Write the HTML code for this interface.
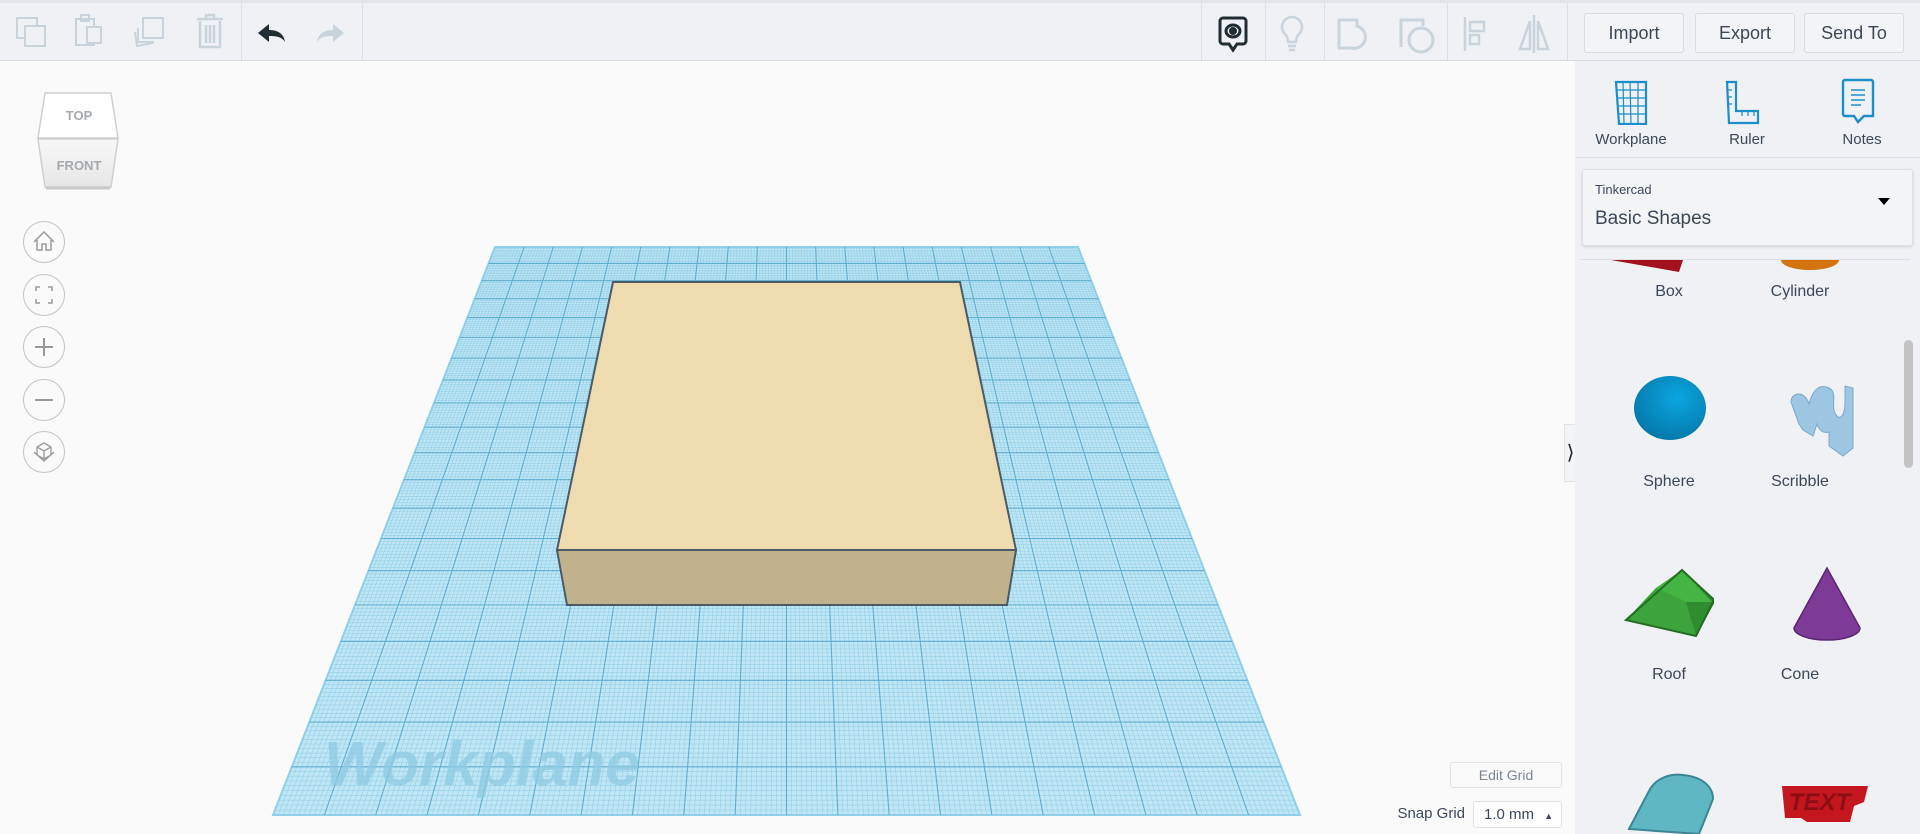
<!DOCTYPE html>
<html><head><meta charset="utf-8"><style>
*{margin:0;padding:0;box-sizing:border-box}
body{width:1920px;height:834px;overflow:hidden;background:#fafafa;font-family:"Liberation Sans",sans-serif;position:relative;color:#3c4858}
.tb{position:absolute;left:0;top:0;width:1920px;height:61px;background:#f0f1f4;border-top:3px solid #e2e4ea;border-bottom:1px solid #d8dbe1}
.sep{position:absolute;top:0;width:1px;height:57px;background:#dcdfe5}
.ic{position:absolute}
.btn{position:absolute;top:10px;height:40px;border:1px solid #d8dbe1;border-radius:3px;background:#f3f4f6;font-size:18px;color:#3c4858;text-align:center;line-height:38px}
.panel{position:absolute;left:1575px;top:61px;width:345px;height:773px;background:#f0f1f4}
.lbl{position:absolute;font-size:15px;color:#3c4858;text-align:center;width:120px}
.circ{position:absolute;left:23px;width:42px;height:42px;border:1px solid #c4c4c4;border-radius:50%;background:#fafafa}
</style></head><body>
<div class="tb">
 <svg class="ic" style="left:16px;top:12px" width="32" height="34" viewBox="0 0 32 34" fill="none" stroke="#c9d3dc" stroke-width="2"><rect x="1" y="3" width="20" height="20"/><rect x="9" y="11" width="20" height="20" fill="#f0f1f4"/></svg>
 <svg class="ic" style="left:74px;top:10px" width="30" height="36" viewBox="0 0 30 36" fill="none" stroke="#c9d3dc" stroke-width="2"><rect x="2" y="6" width="18" height="26"/><rect x="7" y="2" width="8" height="6"/><rect x="13" y="14" width="14" height="16" fill="#f0f1f4"/></svg>
 <svg class="ic" style="left:132px;top:11px" width="36" height="36" viewBox="0 0 36 36" fill="none" stroke="#c9d3dc" stroke-width="2"><path d="M3 18l2 14 16-3"/><path d="M6 14v14h16"/><rect x="11" y="4" width="20" height="20"/></svg>
 <svg class="ic" style="left:196px;top:10px" width="28" height="38" viewBox="0 0 28 38" fill="none" stroke="#c9d3dc" stroke-width="2.5"><path d="M1 6h26M10 6V2h8v4"/><path d="M4 8v26h20V8M10 12v18M14 12v18M18 12v18"/></svg>
 <svg class="ic" style="left:256px;top:18px" width="32" height="24" viewBox="0 0 32 24"><path d="M2 12L13 3v6c9 0 15 4 16 12c-3-5-8-6-16-6v6z" fill="#222d33"/></svg>
 <svg class="ic" style="left:314px;top:18px" width="32" height="24" viewBox="0 0 32 24"><path d="M30 12L19 3v6C10 9 4 13 3 21c3-5 8-6 16-6v6z" fill="#c9d3dc"/></svg>
 <div class="sep" style="left:241px"></div><div class="sep" style="left:362px"></div>
 <div class="sep" style="left:1201px"></div><div class="sep" style="left:1265px"></div><div class="sep" style="left:1324px"></div><div class="sep" style="left:1447px"></div><div class="sep" style="left:1567px"></div>
 <svg class="ic" style="left:1218px;top:12px" width="30" height="38" viewBox="0 0 30 38" fill="none" stroke="#222d33" stroke-width="3"><path d="M5 3h20a3 3 0 0 1 3 3v20a3 3 0 0 1-3 3h-6l-4 6-4-6H5a3 3 0 0 1-3-3V6a3 3 0 0 1 3-3z"/><ellipse cx="15" cy="16" rx="7" ry="6"/><circle cx="15" cy="16" r="2.5" fill="#222d33"/></svg>
 <svg class="ic" style="left:1279px;top:12px" width="26" height="38" viewBox="0 0 26 38" fill="none" stroke="#c9d3dc" stroke-width="2.5"><path d="M13 2a10 10 0 0 0-6 18c1 2 2 4 2 7h8c0-3 1-5 2-7a10 10 0 0 0-6-18zM9 31h8M10 35h6"/></svg>
 <svg class="ic" style="left:1336px;top:14px" width="36" height="36" viewBox="0 0 36 36" fill="none" stroke="#c9d3dc" stroke-width="3"><path d="M3 3h18v6a11 11 0 0 1-6 22H3z"/></svg>
 <svg class="ic" style="left:1398px;top:14px" width="38" height="38" viewBox="0 0 38 38" fill="none" stroke="#c9d3dc" stroke-width="3"><path d="M3 30V3h22v6"/><circle cx="23" cy="23" r="12"/></svg>
 <svg class="ic" style="left:1462px;top:12px" width="26" height="38" viewBox="0 0 26 38" fill="none" stroke="#c9d3dc" stroke-width="2.5"><path d="M3 2v34"/><rect x="8" y="7" width="14" height="9"/><rect x="8" y="20" width="9" height="9"/></svg>
 <svg class="ic" style="left:1517px;top:10px" width="34" height="42" viewBox="0 0 34 42" fill="none" stroke="#c9d3dc" stroke-width="2.5"><path d="M17 2v38"/><path d="M13 8L3 36h10z"/><path d="M21 8l10 28H21z"/></svg>
 <div class="btn" style="left:1584px;width:100px">Import</div>
 <div class="btn" style="left:1695px;width:100px">Export</div>
 <div class="btn" style="left:1804px;width:100px">Send To</div>
</div>

<svg class="ic" style="left:34px;top:90px" width="90" height="102" viewBox="0 0 90 102">
 <defs><linearGradient id="fg" x1="0" y1="0" x2="0" y2="1"><stop offset="0" stop-color="#f8f8f8"/><stop offset="1" stop-color="#e6e6e6"/></linearGradient></defs>
 <path d="M11 3h66l7 45H4z" fill="#fff" stroke="#cfcfcf" stroke-width="1.5"/>
 <path d="M4 49h80l-7 48H11z" fill="url(#fg)" stroke="#cfcfcf" stroke-width="1.5"/>
 <path d="M12 98h64" stroke="#c8c8c8" stroke-width="3"/>
 <text x="45" y="30" font-size="13" font-weight="bold" fill="#a5a8ad" text-anchor="middle" font-family="Liberation Sans">TOP</text>
 <text x="45" y="80" font-size="13" font-weight="bold" fill="#a5a8ad" text-anchor="middle" font-family="Liberation Sans">FRONT</text>
</svg>
<div class="circ" style="top:221px"><svg width="40" height="40" viewBox="0 0 40 40" fill="none" stroke="#999" stroke-width="1.5"><path d="M10 20l10-10 10 10M13 18v10h5v-6h4v6h5V18"/></svg></div>
<div class="circ" style="top:274px"><svg width="40" height="40" viewBox="0 0 40 40" fill="none" stroke="#999" stroke-width="1.5"><path d="M12 16v-4h4M24 12h4v4M28 24v4h-4M16 28h-4v-4"/></svg></div>
<div class="circ" style="top:326px"><svg width="40" height="40" viewBox="0 0 40 40" fill="none" stroke="#999" stroke-width="2"><path d="M20 11v18M11 20h18"/></svg></div>
<div class="circ" style="top:379px"><svg width="40" height="40" viewBox="0 0 40 40" fill="none" stroke="#999" stroke-width="2"><path d="M11 20h18"/></svg></div>
<div class="circ" style="top:431px"><svg width="40" height="40" viewBox="0 0 40 40" fill="none" stroke="#999" stroke-width="1.3"><path d="M20 11l7 4v8l-7 4-7-4v-8zM13 15l7 4 7-4M20 19v8M10 20l10 9 10-9"/></svg></div>

<svg id="wp" class="ic" style="left:0;top:0" width="1575" height="834" viewBox="0 0 1575 834">
 <polygon points="495,247 1078,247 1300,815 273,815" fill="#bfe6f4" stroke="#8fd0e8" stroke-width="2"/>
 <g id="minor" stroke="#86c9e3" stroke-width="0.6" opacity="0.75"></g>
 <g id="major" stroke="#4ea5c9" stroke-width="1.1" opacity="0.85"></g>
 <text x="324" y="785" font-size="62" font-weight="bold" font-style="italic" fill="#8ecbe2" opacity="0.75" font-family="Liberation Sans">Workplane</text>
 <polygon points="557,550 1016,550 1007,605 567,605" fill="#c1b28d" stroke="#4a5a66" stroke-width="2"/>
 <polygon points="613,282 960,282 1016,550 557,550" fill="#eedcb0" stroke="#4a5a66" stroke-width="2"/>
</svg>
<script>
(function(){
 var ns="http://www.w3.org/2000/svg",mj=document.getElementById('major'),mn=document.getElementById('minor');
 var yt=247,yb=815,tl=495,tr=1078,bl=273,br=1300,wt=1027,wb=583;
 function L(g,x1,y1,x2,y2){var l=document.createElementNS(ns,'line');l.setAttribute('x1',x1);l.setAttribute('y1',y1);l.setAttribute('x2',x2);l.setAttribute('y2',y2);g.appendChild(l);}
 var N=200;
 for(var i=1;i<N;i++){var u=i/N;var g=(i%10==0)?mj:mn;L(g,tl+(tr-tl)*u,yt,bl+(br-bl)*u,yb);}
 for(var j=1;j<N;j++){var s=j/N;var d=wt*(1-s)+wb*s;var k=wb*s/d;var y=yt+(yb-yt)*k;var xl=tl+(bl-tl)*k,xr=tr+(br-tr)*k;var g=(j%10==0)?mj:mn;L(g,xl,y,xr,y);}
})();
</script>

<div style="position:absolute;left:1450px;top:762px;width:112px;height:26px;border:1px solid #e0e2e6;border-radius:3px;background:#fafafa;font-size:14px;color:#7b8590;text-align:center;line-height:24px">Edit Grid</div>
<div style="position:absolute;left:1380px;top:805px;width:85px;font-size:15px;color:#3c4858;text-align:right">Snap Grid</div>
<div style="position:absolute;left:1473px;top:801px;width:89px;height:27px;border:1px solid #e0e2e6;border-radius:3px;background:#fff;font-size:15px;color:#3c4858;line-height:25px;padding-left:10px">1.0 mm <span style="font-size:9px;margin-left:6px">▲</span></div>

<div style="position:absolute;left:1564px;top:424px;width:12px;height:58px;background:#f3f4f6;border:1px solid #e0e2e6;border-right:none;font-size:20px;line-height:56px;color:#222;text-align:center">&#x27E9;</div>

<div class="panel">
 <svg class="ic" style="left:38px;top:18px" width="36" height="46" viewBox="0 0 36 46" fill="none" stroke="#1a8fc9" stroke-width="2.2"><path d="M3 3h30v42H6z"/><path d="M3 11h30M4 19h29M4 27h29M5 35h28M10 3l1 42M17 3l1 42M25 3l0 42" stroke-width="1.2"/></svg>
 <svg class="ic" style="left:149px;top:18px" width="36" height="46" viewBox="0 0 36 46" fill="none" stroke="#1a8fc9" stroke-width="2.2"><path d="M3 3h9v29h22v12H5z"/><path d="M3 11h5M3 18h5M3 25h5M18 32v5M24 32v5M30 32v5" stroke-width="1.3"/></svg>
 <svg class="ic" style="left:266px;top:17px" width="34" height="46" viewBox="0 0 34 46" fill="none" stroke="#1a8fc9" stroke-width="2.4"><path d="M4 2h26a2 2 0 0 1 2 2v34H23l-6 6-4-6H4a2 2 0 0 1-2-2V4a2 2 0 0 1 2-2z"/><path d="M10 12h14M10 17h14M10 22h14M10 27h10" stroke-width="1.5"/></svg>
 <div class="lbl" style="left:-4px;top:70px">Workplane</div>
 <div class="lbl" style="left:112px;top:70px">Ruler</div>
 <div class="lbl" style="left:227px;top:70px">Notes</div>
 <div style="position:absolute;left:0;top:96px;width:345px;height:1px;background:#dcdfe5"></div>
 <div style="position:absolute;left:7px;top:108px;width:331px;height:77px;background:#f3f4f6;border:1px solid #dcdfe5;border-radius:3px;box-shadow:0 1px 3px rgba(0,0,0,.12)">
  <div style="position:absolute;left:12px;top:12px;font-size:13px;color:#3c4858">Tinkercad</div>
  <div style="position:absolute;left:12px;top:38px;font-size:19px;color:#3c4858">Basic Shapes</div>
  <div style="position:absolute;left:295px;top:28px;width:0;height:0;border-left:6px solid transparent;border-right:6px solid transparent;border-top:7px solid #000"></div>
 </div>
 <div style="position:absolute;left:5px;top:198px;width:330px;height:1px;background:#dcdfe5"></div>
 <svg class="ic" style="left:30px;top:199px" width="100" height="14" viewBox="0 0 100 14"><path d="M6 0h72l-4 12z" fill="#a3111f"/></svg>
 <svg class="ic" style="left:200px;top:199px" width="70" height="12" viewBox="0 0 70 12"><path d="M6 0h58a29 10 0 0 1-58 0z" fill="#d3740f"/></svg>
 <div class="lbl" style="left:34px;top:222px;font-size:16px">Box</div>
 <div class="lbl" style="left:165px;top:222px;font-size:16px">Cylinder</div>
 <svg class="ic" style="left:54px;top:305px" width="82" height="82" viewBox="0 0 82 82"><defs><radialGradient id="sg" cx=".6" cy=".35" r=".7"><stop offset="0" stop-color="#0aa6e0"/><stop offset="1" stop-color="#0577a8"/></radialGradient></defs><ellipse cx="41" cy="42" rx="36" ry="32" fill="url(#sg)"/></svg>
 <svg class="ic" style="left:212px;top:315px" width="74" height="86" viewBox="0 0 74 86"><path d="M4 26c0-10 14-12 18 2 4-16 12-20 20-16 10 5 0 20 8 28 4 4 8-2 8-14V10l8 2v60l-10 8-14-10V56c-6 2-10-2-12-8l-4 12-10-6-4-6z" fill="#9cc6e2" stroke="#7aa8c8" stroke-width="1"/></svg>
 <div class="lbl" style="left:34px;top:412px;font-size:16px">Sphere</div>
 <div class="lbl" style="left:165px;top:412px;font-size:16px">Scribble</div>
 <svg class="ic" style="left:49px;top:507px" width="90" height="70" viewBox="0 0 90 70"><path d="M2 52l30-32L58 2l34 30-20 36z" fill="#2f8c2f"/><path d="M32 20L58 2l30 32-26 0z" fill="#44b544"/><path d="M2 52l30-32 30 14 10 34z" fill="#3da43d"/><path d="M2 52L58 2l32 30-18 36z" fill="none" stroke="#236d23" stroke-width="2"/></svg>
 <svg class="ic" style="left:216px;top:505px" width="72" height="78" viewBox="0 0 72 78"><path d="M36 2L3 62a33 12 0 0 0 66 0z" fill="#7d3a96" stroke="#5b2670" stroke-width="1.5"/></svg>
 <div class="lbl" style="left:34px;top:605px;font-size:16px">Roof</div>
 <div class="lbl" style="left:165px;top:605px;font-size:16px">Cone</div>
 <svg class="ic" style="left:52px;top:708px" width="90" height="65" viewBox="0 0 90 65"><path d="M2 60l20-38C28 10 42 4 56 6c20 2 30 12 30 24L72 65z" fill="#5fb7c4" stroke="#3a8694" stroke-width="2"/></svg>
 <svg class="ic" style="left:202px;top:715px" width="96" height="50" viewBox="0 0 96 50"><path d="M5 10h86l-4 16-10 4-4 16H30l-6-4H8z" fill="#c4161f"/><text x="12" y="34" font-size="24" font-weight="bold" font-style="italic" fill="#8c0e15" font-family="Liberation Sans">TEXT</text></svg>
 <div style="position:absolute;left:329px;top:279px;width:9px;height:128px;background:#c4c4c4;border-radius:5px"></div>
</div>
</body></html>
